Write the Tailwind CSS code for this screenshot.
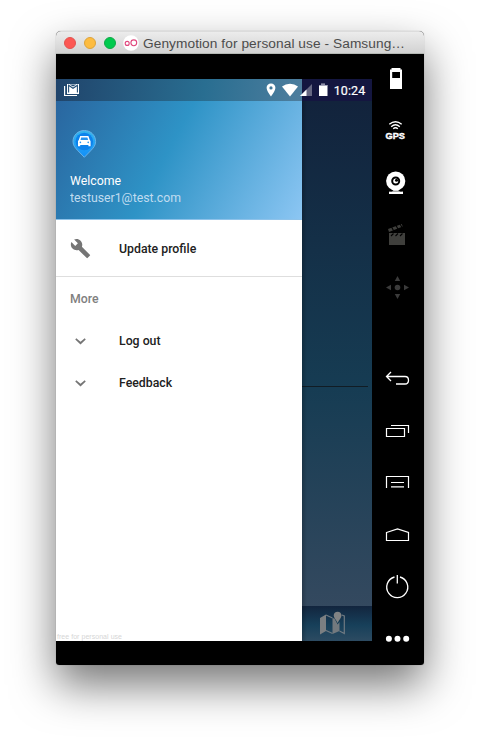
<!DOCTYPE html>
<html lang="en">
<head>
<meta charset="utf-8">
<title>Genymotion</title>
<script src="https://cdn.jsdelivr.net/npm/@tailwindcss/browser@4"></script>
</head>
<body class="bg-white w-[480px] h-[745px] overflow-hidden pt-[31px] pl-[56px] font-['Roboto',sans-serif]">
<div class="w-[368px] h-[634px] rounded-t-[5px] rounded-b-[3px] shadow-[0_20px_44px_rgba(0,0,0,0.54),0_0_1px_rgba(0,0,0,0.4)]">
<div class="w-full h-full rounded-t-[5px] rounded-b-[3px] overflow-hidden bg-black flex flex-col">
  <header class="h-[23px] shrink-0 bg-linear-to-b from-[#ececec] to-[#d2d2d2] border-t border-t-[#dcdcdc] border-b border-b-[#b4b8b4] flex items-center pl-2">
    <div class="flex gap-2 items-center">
      <span class="size-3 rounded-full bg-[#fc5753] border border-[#e2534f]"></span>
      <span class="size-3 rounded-full bg-[#fdbc40] border border-[#dda33a]"></span>
      <span class="size-3 rounded-full bg-[#00ca4e] border border-[#10a847]"></span>
    </div>
    <svg class="ml-[7px] w-4 h-4 shrink-0" viewBox="0 0 16 16" fill="none"><circle cx="8" cy="8" r="7.8" fill="#fff"/><circle cx="4.200" cy="8.400" r="2" stroke="#e0487d" stroke-width="1.100"/><circle cx="10.800" cy="7.800" r="2.900" stroke="#e0487d" stroke-width="1.100"/></svg>
    <svg class="ml-1 w-[266px] h-5 shrink-0" viewBox="0 0 266 20"><text x="0" y="15" textLength="262" font-family="Liberation Sans, sans-serif" font-size="13.700" fill="#4c4c4c">Genymotion for personal use - Samsung…</text></svg>
  </header>
  <div class="flex flex-1 min-h-0">
    <main class="mt-[25px] w-[316px] h-[562px] relative flex shrink-0">
      <section class="w-[246px] bg-white flex flex-col">
        <div class="h-[141px] shrink-0 bg-[linear-gradient(118deg,#29629c_0%,#2e93c6_47%,#8cc6f3_100%)] border-b border-b-[#8fc3ea] flex flex-col pl-[14px] pt-[50px] text-[12.3px] leading-[17px]">
          <svg class="w-7 h-[30px] mb-3 shrink-0" viewBox="0 0 28 30"><defs><linearGradient id="p" x2="0" y2="1"><stop stop-color="#35b5ee"/><stop offset="1" stop-color="#118ff8"/></linearGradient></defs><path d="M14.300 1.500C8 1.500 3 6.200 3 12.500C3 16.500 5.300 19 8 21.800L14.300 28.300L20.600 21.800C23.300 19 25.600 16.500 25.600 12.500C25.600 6.200 20.600 1.500 14.300 1.500Z" fill="url(#p)" stroke="#68b2e8"/><circle cx="14.300" cy="12.500" r="8.800" fill="#0c82ec"/><path d="M10.200 7H18.400L19.800 11Q20.600 11.500 20.600 12.500V17.200H18.400V16H10.200V17.200H8V12.500Q8 11.500 8.800 11Z" fill="#fff"/><path d="M11.200 8.500H17.400L18.100 10.900H10.500Z" fill="#2793ef"/><circle cx="10.400" cy="13.400" r=".8" fill="#2793ef"/><circle cx="18.200" cy="13.400" r=".8" fill="#2793ef"/></svg>
          <svg class="w-[200px] h-[17px]" viewBox="0 0 200 17"><text x="0" y="14" textLength="51" font-size="12.300" fill="#fff" font-family="Roboto, sans-serif">Welcome</text></svg>
          <svg class="w-[200px] h-[17px]" viewBox="0 0 200 17"><text x="0" y="14" textLength="111" font-size="12.300" fill="#c0dcf0" font-family="Roboto, sans-serif">testuser1@test.com</text></svg>
        </div>
        <div class="h-[57px] shrink-0 border-b border-[#dedede] flex items-center">
          <svg class="ml-[14px] size-[21px]" viewBox="0 0 24 24" fill="#757575"><path d="M22.700 19l-9.100-9.100c.9-2.300.4-5-1.500-6.900-2-2-5-2.400-7.400-1.300L9 6 6 9 1.600 4.700C.4 7.100.9 10.100 2.900 12.100c1.900 1.900 4.600 2.400 6.900 1.500l9.100 9.100c.4.4 1 .4 1.400 0l2.300-2.300c.5-.4.5-1.100.1-1.400z"/></svg>
          <span class="ml-7 pt-[2px] text-[12.3px] font-medium text-[#212121]">Update profile</span>
        </div>
        <div class="h-[43px] pl-[14px] pt-[2px] flex items-center text-[12.3px] font-medium text-[#808080]">More</div>
        <div class="h-[42px] flex items-center"><svg class="ml-[14px] size-[21px]" viewBox="0 0 24 24" fill="#757575"><path d="M7.200 8.200L12 12.200l4.800-4L18 9.800l-6 5.600-6-5.600z"/></svg><span class="ml-7 text-[12.3px] font-medium text-[#212121]">Log out</span></div>
        <div class="h-[42px] flex items-center"><svg class="ml-[14px] size-[21px]" viewBox="0 0 24 24" fill="#757575"><path d="M7.200 8.200L12 12.200l4.800-4L18 9.800l-6 5.600-6-5.600z"/></svg><span class="ml-7 text-[12.3px] font-medium text-[#212121]">Feedback</span></div>
        <svg class="mt-auto w-[80px] h-[9px]" viewBox="0 0 80 9"><text x="1" y="7" textLength="65" font-size="7" fill="#d6d6d6" font-family="Liberation Sans, sans-serif">free for personal use</text></svg>
      </section>
      <section class="w-[70px] flex flex-col bg-[linear-gradient(180deg,#12233c_4%,#163c53_55%,#34495f_94%)]">
        <div class="mt-[307px] mr-[4px] h-px bg-[#111c24]"></div>
        <div class="mt-auto h-[35px] bg-[linear-gradient(180deg,#12253e,#17405a_55%,#2d4b62)] flex pl-[17px] pt-[5px]">
          <svg class="w-[27px] h-[25px]" viewBox="0 0 27 25"><path d="M1 7L7 3.500V20L1 23.500Z" fill="#7b7f82"/><path d="M7 4L13.500 7M7 19.500L13.500 22.500M20.500 20L25.300 22.500V5L22.800 4" stroke="#6f7a82" stroke-width="1.200" fill="none"/><path d="M13.500 7L15.500 7.500L18.600 13.500L20.500 11V20L13.500 23Z" fill="#73797e"/><path d="M18.600 .8C16.300 .8 14.700 2.400 14.700 4.600C14.700 6.800 16.800 8.500 18.600 12C20.400 8.500 22.500 6.800 22.500 4.600C22.500 2.400 20.900 .8 18.600 .8Z" fill="#818384"/></svg>
        </div>
      </section>
      <div class="absolute top-0 left-[246px] w-[5px] h-full bg-linear-to-r from-black/20 to-transparent"></div>
      <div class="absolute top-0 inset-x-0 h-[22px] flex">
        <div class="w-[246px] bg-[linear-gradient(97deg,#20446b,#296e91_60%,#4e7e9e)]"></div><div class="w-[70px] bg-[#141640]"></div>
      </div>
      <svg class="absolute left-0 top-0 w-[316px] h-[22px]" viewBox="56 79 316 22" fill="#fff">
        <path d="M64 86H65.200V95H77V96H64Z"/><path d="M67 84H79V94H67Z"/><path d="M68.600 92.500V85.200L73 88.300L77.400 85.200V92.500" fill="none" stroke="#244f76" stroke-width="1.100"/><path d="M69.500 84.500H76.500L73 86.600Z" fill="#244f76"/>
        <path d="M271 83.500C268.500 83.500 266.600 85.300 266.600 87.800C266.600 91 271 96.500 271 96.500S275.400 91 275.400 87.800C275.400 85.300 273.500 83.500 271 83.500ZM271 86.300A1.600 1.600 0 1 1 271 89.500A1.600 1.600 0 1 1 271 86.300Z" fill-rule="evenodd"/>
        <path d="M282 86.500Q285.500 83.800 290 83.800T298 86.500L290 96.500Z"/><path d="M312 84V96H300Z" opacity=".35"/><path d="M306.500 89.500V96H300Z"/>
        <path d="M319 85H321V83.800H325V85H327.500V96H319Z"/><path d="M319 85H321V83.800H325V85H327.500V85.800H319Z" fill="#8a8ba5"/>
        <text x="333.700" y="95" textLength="31.500" font-family="Roboto, sans-serif" font-weight="400" stroke="#fff" stroke-width=".2" font-size="12.500">10:24</text>
      </svg>
    </main>
    <aside class="w-[52px] pt-[6px] flex flex-col items-center gap-4 [&>svg]:size-9 [&>svg]:shrink-0">
      <svg viewBox="380 60 36 36"><path d="M390 69.500H391.500V68H400.500V69.500H402V89H390ZM392.200 72V78H400V72Z" fill="#fff" fill-rule="evenodd"/></svg>
      <svg viewBox="380 112 36 36" fill="none" stroke="#fff" stroke-width="1.400"><path d="M389.300 124.300Q395.500 119 401.700 124.300M391.200 126.700Q395.500 123 399.800 126.700M393.200 128.800Q395.500 126.800 397.800 128.800"/><text x="385.600" y="138.500" textLength="19.400" lengthAdjust="spacingAndGlyphs" fill="#fff" stroke="#fff" stroke-width=".4" font-family="Liberation Sans, sans-serif" font-weight="700" font-size="8.700">GPS</text></svg>
      <svg viewBox="380 164 36 36"><circle cx="395.700" cy="181" r="9.600" fill="#fff"/><circle cx="395.700" cy="181" r="3.500" fill="#fff" stroke="#000" stroke-width="2"/><circle cx="396.500" cy="180.200" r="1.500" fill="#000"/><path d="M389 194V191.500H392L393.500 190H398L400 191.500H403V194Z" fill="#fff"/><path d="M389 191.200H402.500" stroke="#000" stroke-width=".5"/></svg>
      <svg viewBox="380 216 36 36"><path d="M389 233H405V245H389ZM388 229L401.800 224L402.700 226.400L389 232Z" fill="#3f3f3c"/><path d="M391 236L393.500 233.500M395.500 236L398 233.500M400 236L402.500 233.500M391.500 227L393.500 230.500M396 225.500L398 229M400 224L402 227.500" stroke="#000" stroke-width="1.100"/></svg>
      <svg viewBox="380 268 36 36" fill="#3b3b3b"><circle cx="397.500" cy="287.500" r="2.800"/><path d="M394.800 281L397.500 276L400.200 281ZM394.800 294L397.500 299L400.200 294ZM391 284.800L386 287.500L391 290.200ZM404 284.800L409 287.500L404 290.200Z"/></svg>
      <svg class="mt-10" viewBox="380 360 36 36" fill="none" stroke="#fff" stroke-width="1.300"><path d="M391 372L386.500 376.500L391 381M386.500 376.500H405Q408.500 376.500 408.500 380.200T405 384H396"/></svg>
      <svg viewBox="380 412 36 36" fill="none" stroke="#fff" stroke-width="1.200"><path d="M386.500 428.500H404.500V436.500H386.500ZM391 425.500H408.500V433"/></svg>
      <svg viewBox="380 464 36 36" fill="none" stroke="#fff" stroke-width="1.200"><path d="M386.500 488V476.500H408.500V488M391 482.500H404M391 486.800H404"/></svg>
      <svg viewBox="380 516 36 36" fill="none" stroke="#fff" stroke-width="1.200"><path d="M386.500 532.500L397.500 529L408.500 532.500V540.500H386.500Z"/></svg>
      <svg viewBox="380 568 36 36" fill="none" stroke="#fff" stroke-width="1.300"><path d="M394.500 577A10.500 10.500 0 1 0 400 577M397.300 575V583.500"/></svg>
      <svg viewBox="380 620 36 36" fill="#fff"><circle cx="388.900" cy="638.700" r="3"/><circle cx="397.500" cy="638.700" r="3"/><circle cx="406.200" cy="638.700" r="3"/></svg>
    </aside>
  </div>
</div>
</div>
</body>
</html>
